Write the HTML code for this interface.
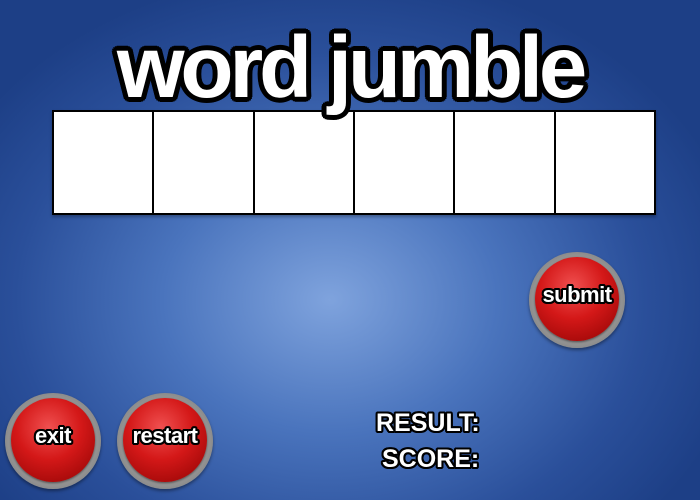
<!DOCTYPE html>
<html><head><style>
html,body{margin:0;padding:0;}
body{width:700px;height:500px;overflow:hidden;position:relative;
background:radial-gradient(ellipse 420px 330px at 330px 300px,#7fa3dd 0%,#4a74bd 40%,#2a4f9a 75%,#1d3f86 100%);
font-family:"Liberation Sans",Arial,sans-serif;}
.title{position:absolute;left:0;width:700px;top:18px;text-align:center;font-weight:bold;font-size:87px;letter-spacing:-4.2px;color:#fff;z-index:2;line-height:100px;
text-shadow:5px 0 #000,-5px 0 #000,0 5px #000,0 -5px #000,3.5px 3.5px #000,-3.5px 3.5px #000,3.5px -3.5px #000,-3.5px -3.5px #000,4.6px 1.9px #000,-4.6px 1.9px #000,4.6px -1.9px #000,-4.6px -1.9px #000,1.9px 4.6px #000,-1.9px 4.6px #000,1.9px -4.6px #000,-1.9px -4.6px #000;}
.boxes{position:absolute;left:52px;top:110px;width:600px;height:101px;border:2px solid #000;display:flex;background:#fff;z-index:1;box-shadow:0 2px 3px rgba(0,0,0,.3);}
.boxes div{flex:1;border-left:2px solid #000;}
.boxes div:first-child{border-left:none;}
.btn{position:absolute;width:96px;height:96px;border-radius:50%;
background:radial-gradient(circle at 50% 50%,#ddd 0,#999 60%,#666 100%);box-shadow:0 2px 3px rgba(0,0,0,.4);}
.btn .in{position:absolute;left:6px;top:5px;width:84px;height:84px;border-radius:50%;
background:radial-gradient(circle at 45% 35%,#f05050 0%,#d41818 45%,#a00808 85%,#800000 100%);box-shadow:0 1px 2px rgba(0,0,0,.5);}
.o{text-shadow:2px 0 #000,-2px 0 #000,0 2px #000,0 -2px #000,1.5px 1.5px #000,-1.5px 1.5px #000,1.5px -1.5px #000,-1.5px -1.5px #000,2px 1px #000,-2px 1px #000,2px -1px #000,-2px -1px #000,1px 2px #000,-1px 2px #000,1px -2px #000,-1px -2px #000;}
.btn span{position:absolute;left:-10px;width:116px;top:30px;text-align:center;color:#fff;font-weight:bold;font-size:22px;letter-spacing:-0.5px;}
.lbl{position:absolute;color:#fff;font-weight:bold;font-size:25px;letter-spacing:0;}
</style></head><body>
<div class="title">word jumble</div>
<div class="boxes"><div></div><div></div><div></div><div></div><div></div><div></div></div>
<div class="btn" style="left:529px;top:252px"><div class="in"></div><span class="o">submit</span></div>
<div class="btn" style="left:5px;top:393px"><div class="in"></div><span class="o">exit</span></div>
<div class="btn" style="left:117px;top:393px"><div class="in"></div><span class="o">restart</span></div>
<div class="lbl o" style="left:376px;top:409px">RESULT:</div>
<div class="lbl o" style="left:382px;top:445px">SCORE:</div>
</body></html>
